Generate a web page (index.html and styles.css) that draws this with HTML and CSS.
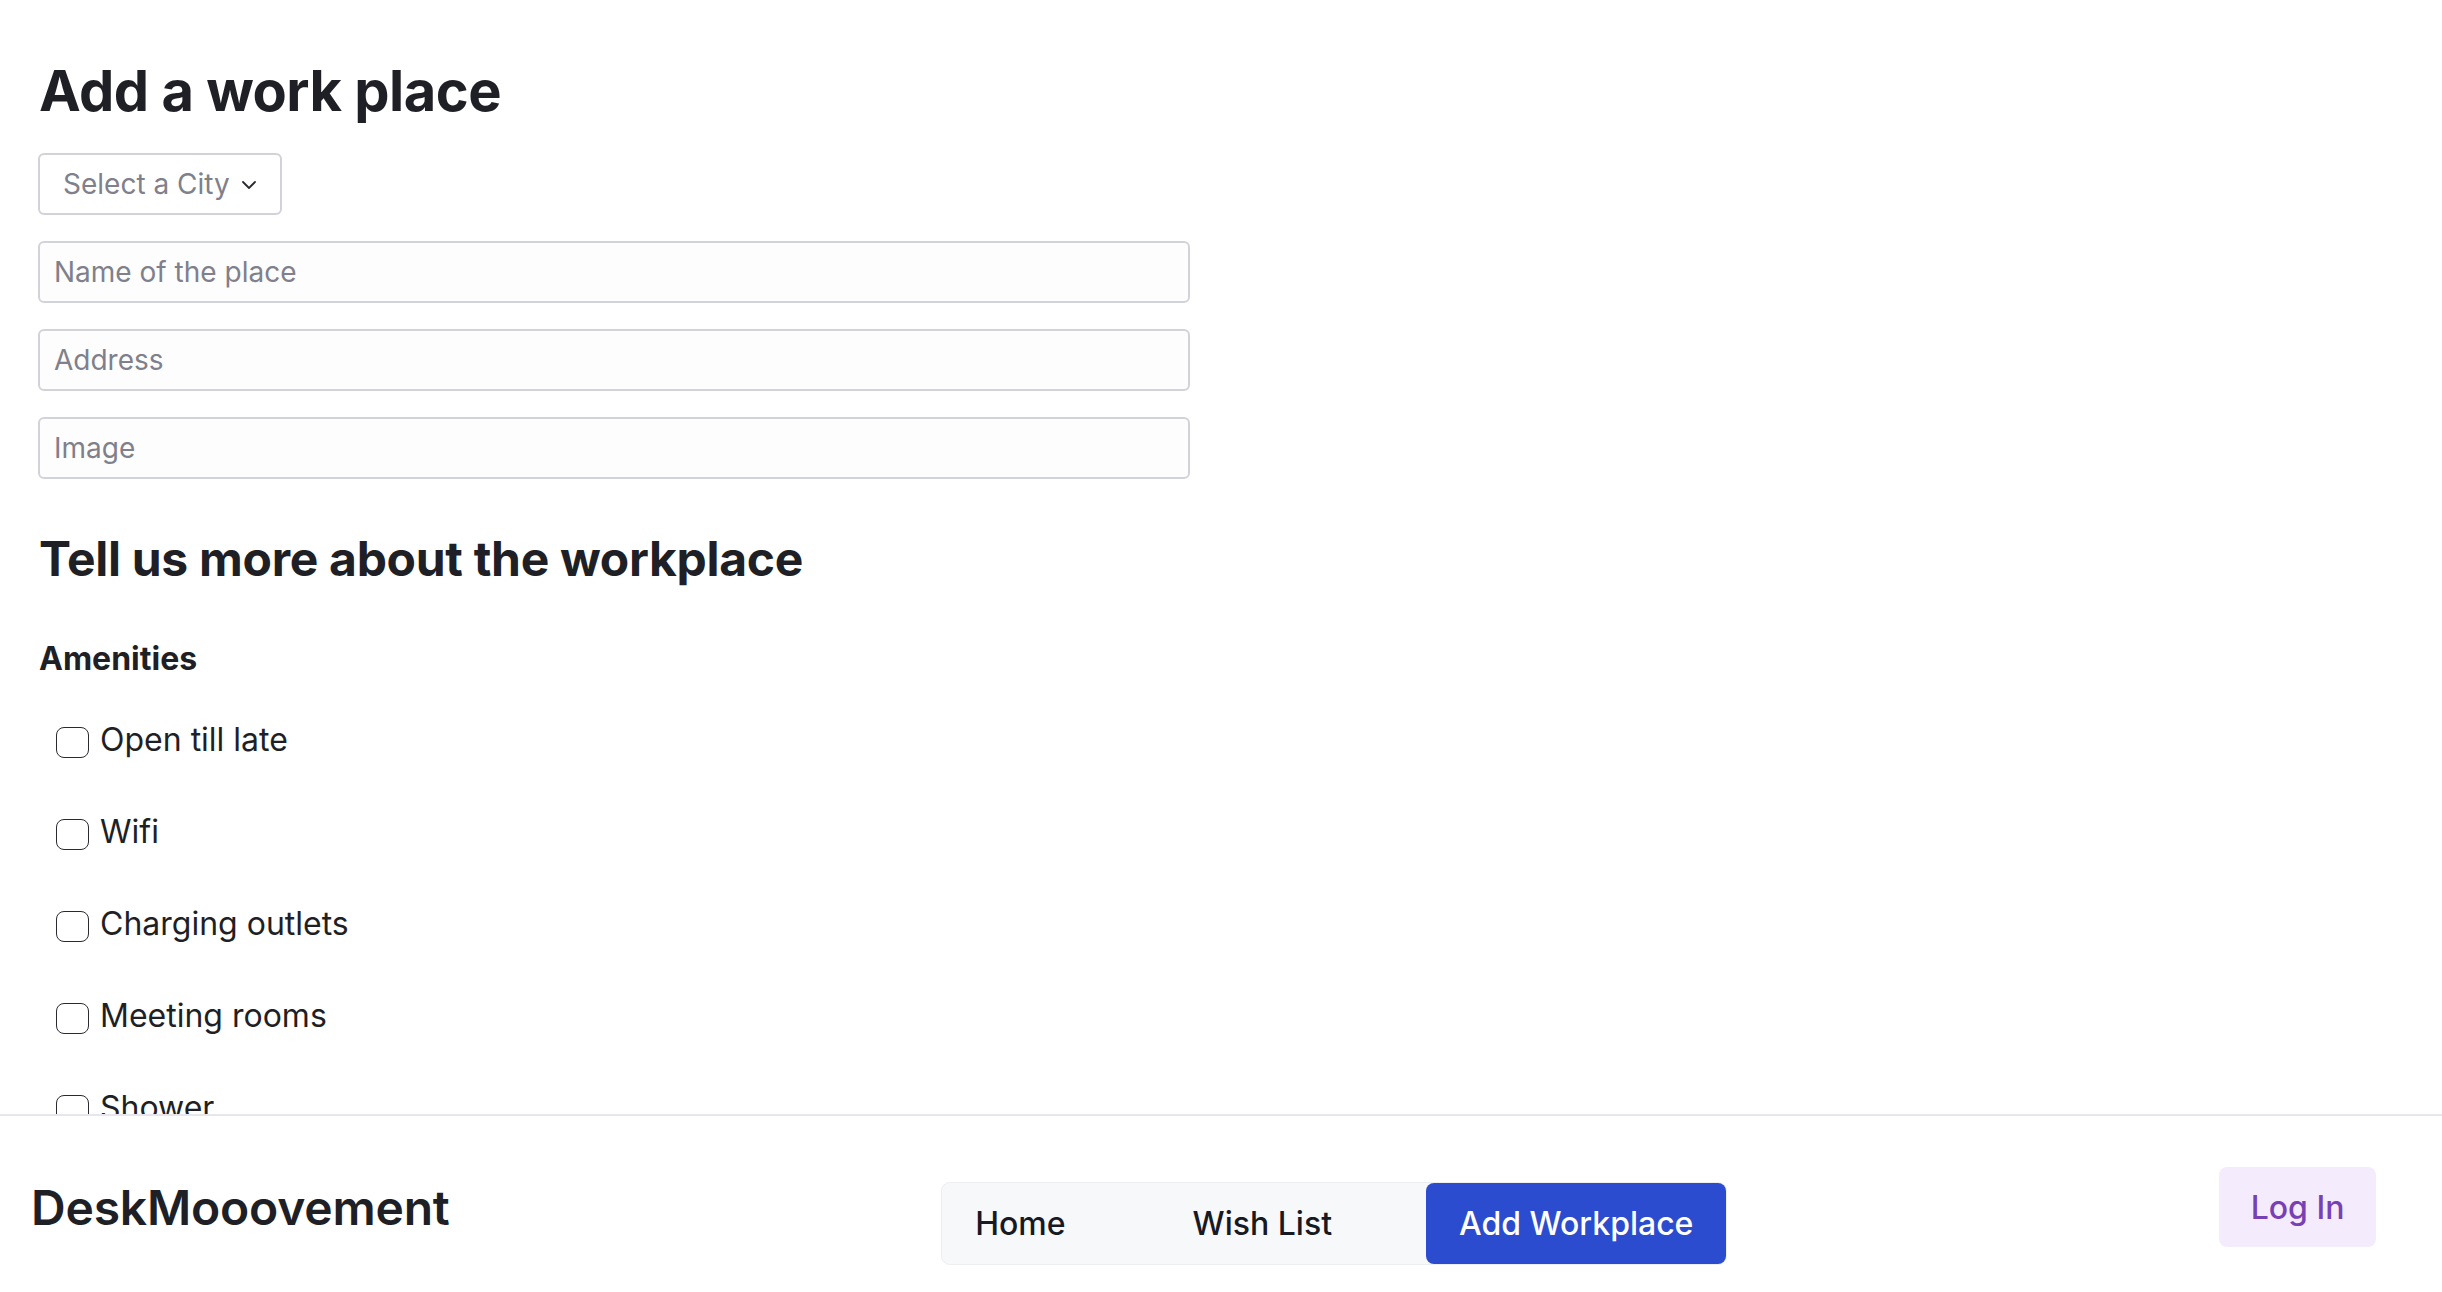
FILE: index.html
```html
<!DOCTYPE html>
<html lang="en">
<head>
<meta charset="utf-8">
<title>DeskMooovement - Add a work place</title>
<link rel="stylesheet" href="styles.css">
</head>
<body>
<div class="page">
  <main class="content">
    <h1 class="title">Add a work place</h1>
    <div class="select">
      <span class="select-label">Select a City</span>
      <svg class="chevron" width="16" height="10" viewBox="0 0 16 10"><path d="M2 2 L8 8 L14 2" fill="none" stroke="#2a2a30" stroke-width="1.8" stroke-linecap="round" stroke-linejoin="round"/></svg>
    </div>
    <input class="field" type="text" placeholder="Name of the place">
    <input class="field" type="text" placeholder="Address">
    <input class="field" type="text" placeholder="Image">
    <h2 class="subtitle">Tell us more about the workplace</h2>
    <h3 class="group-title">Amenities</h3>
    <ul class="amenities">
      <li class="amenity"><span class="box"></span><span>Open till late</span></li>
      <li class="amenity"><span class="box"></span><span>Wifi</span></li>
      <li class="amenity"><span class="box"></span><span>Charging outlets</span></li>
      <li class="amenity"><span class="box"></span><span>Meeting rooms</span></li>
      <li class="amenity"><span class="box"></span><span>Shower</span></li>
    </ul>
  </main>
  <footer class="bar">
    <div class="logo">DeskMooovement</div>
    <nav class="nav">
      <a class="nav-item">Home</a>
      <a class="nav-item">Wish List</a>
      <a class="nav-item active">Add Workplace</a>
    </nav>
    <button class="login">Log In</button>
  </footer>
</div>
</body>
</html>
```

FILE: styles.css
```css
* { box-sizing: border-box; }
html, body { margin: 0; padding: 0; background: #ffffff; }
body {
  font-family: Inter, "Noto Sans", sans-serif;
  color: #1f1f26;
}
.page {
  height: 100vh;
  display: flex;
  flex-direction: column;
}
.content {
  flex: 1;
  min-height: 0;
  overflow: hidden;
  padding: 58px 0 0 38px;
  display: flex;
  flex-direction: column;
  align-items: flex-start;
}
.content > * { flex-shrink: 0; }
.title {
  margin: 0;
  font-size: 56px;
  line-height: 1.2;
  font-weight: 700;
  letter-spacing: -0.5px;
  padding-left: 1px;
}
.select {
  margin-top: 28px;
  width: 244px;
  height: 62px;
  border: 2px solid #d2d2da;
  border-radius: 6px;
  display: flex;
  align-items: center;
  padding: 0 0 0 23px;
  gap: 11px;
}
.select-label {
  font-size: 28px;
  color: #80808c;
}
.chevron { margin-top: 2px; }
.field {
  margin-top: 26px;
  width: 1152px;
  height: 62px;
  border: 2px solid #d2d2da;
  border-radius: 6px;
  background: #fdfdfd;
  padding: 0 14px;
  font-family: Inter, "Noto Sans", sans-serif;
  font-size: 28px;
  color: #1f1f26;
}
.field::placeholder { color: #80808c; }
.subtitle {
  margin: 51px 0 0 1px;
  font-size: 48px;
  line-height: 1.2;
  font-weight: 700;
  letter-spacing: -0.3px;
}
.group-title {
  margin: 52px 0 0 1px;
  font-size: 32px;
  line-height: 1.2;
  font-weight: 700;
}
.amenities {
  list-style: none;
  margin: 40px 0 0 18px;
  padding: 0;
  display: flex;
  flex-direction: column;
  gap: 44px;
}
.amenity {
  display: flex;
  align-items: center;
  gap: 11px;
  font-size: 32px;
  line-height: 48px;
  height: 48px;
  color: #1f1f26;
}
.amenity span:last-child { margin-top: -4px; }
.box {
  width: 33px;
  height: 31px;
  border: 1.5px solid #2a2a30;
  border-radius: 8px;
  flex: none;
}
.bar {
  flex: none;
  height: 178px;
  border-top: 2px solid #e6e6ec;
  display: flex;
  justify-content: space-between;
  align-items: flex-start;
  padding: 51px 66px 0 31px;
  background: #ffffff;
}
.logo {
  margin-top: 12px;
  font-size: 48px;
  line-height: 1.2;
  font-weight: 600;
  color: #1f1f26;
  letter-spacing: -0.2px;
}
.nav {
  margin-top: 15px;
  display: flex;
  gap: 61px;
  background: #f7f8fa;
  border: 1px solid #eceef2;
  border-radius: 9px;
  height: 83px;
}
.nav-item {
  display: flex;
  align-items: center;
  padding: 0 33px;
  font-size: 32px;
  font-weight: 500;
  color: #171923;
  border-radius: 8px;
  height: 81px;
}
.nav-item.active {
  background: #2b4ccf;
  color: #ffffff;
}
.login {
  width: 157px;
  height: 80px;
  border: none;
  border-radius: 8px;
  background: #f4ebfc;
  color: #7740b4;
  font-family: Inter, "Noto Sans", sans-serif;
  font-size: 32px;
  font-weight: 500;
  padding: 0;
}
```
